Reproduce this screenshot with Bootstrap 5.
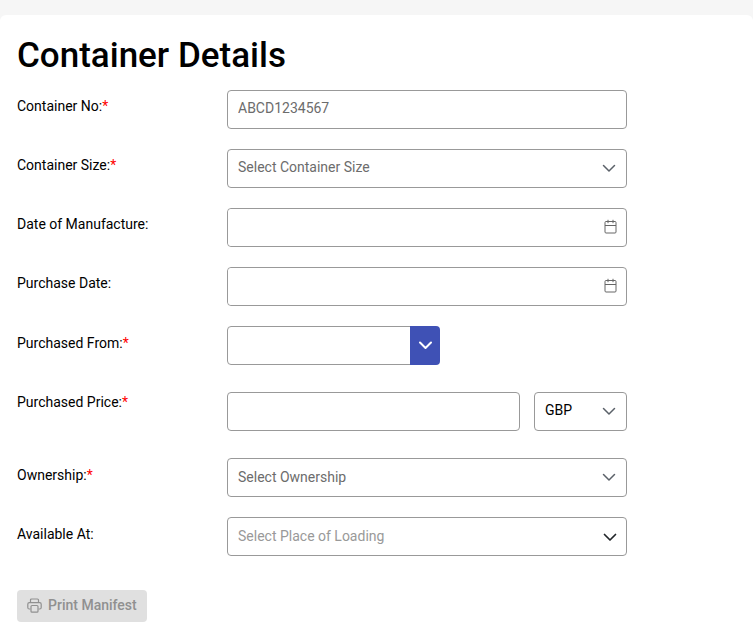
<!DOCTYPE html>
<html lang="en">
<head>
<meta charset="utf-8">
<meta name="viewport" content="width=device-width, initial-scale=1">
<title>Container Details</title>
<link href="https://cdn.jsdelivr.net/npm/bootstrap@5.3.0/dist/css/bootstrap.min.css" rel="stylesheet">
<style>
  body { background: #f6f6f6; font-family: Roboto, "Liberation Sans", sans-serif; font-size: 14px; line-height: 20px; color: #000; }
  .panel { background: #fff; border-radius: 6px 6px 0 0; margin-top: 15px; padding: 19px 17px 9px; min-height: calc(100vh - 15px); }
  .panel-title { font-size: 35px; line-height: 44px; font-weight: 500; margin-bottom: 12px; }
  .form-rows { display: grid; gap: 20px; }
  .form-row { display: grid; grid-template-columns: 210px minmax(0, 400px); }
  .row-label { padding-top: 6px; justify-self: start; align-self: start; }
  .req { color: #f00; }
  .price-row .row-field { padding: 7px 0; gap: 14px; }
  .price-row .row-label, .low-label .row-label { padding-top: 7px; }
  .currency { flex: 0 0 93px; }
  .supplier { max-width: 213px; }
  .form-control, .form-select { height: 39px; border: 1px solid #999; border-radius: 4px; padding: 7px 10px 10px; font-size: 14px; line-height: 20px; color: #000; }
  .form-control::placeholder { color: #6c6c6c; opacity: 1; }
  .low-label .form-select { padding: 8px 34px 9px 10px; }
  .form-select { padding-right: 34px; background-size: 14px 14px; background-position: right 10px top 11px;
    background-image: url("data:image/svg+xml,%3csvg xmlns='http://www.w3.org/2000/svg' viewBox='0 0 14 14'%3e%3cpath fill='none' stroke='%235b6169' stroke-width='1.5' stroke-linecap='round' stroke-linejoin='round' d='M1.500 4.500 7 10l5.500-5.500'/%3e%3c/svg%3e"); }
  .form-select.unset { color: #6c6c6c; }
  .form-select.faded { color: #999; background-position: right 9px top 12px;
    background-image: url("data:image/svg+xml,%3csvg xmlns='http://www.w3.org/2000/svg' viewBox='0 0 14 14'%3e%3cpath fill='none' stroke='%23212529' stroke-width='1.7' stroke-linecap='round' stroke-linejoin='round' d='M1.500 4.500 7 10l5.500-5.500'/%3e%3c/svg%3e"); }
  .form-select option { color: #000; }
  .date-box { border: 1px solid #999; border-radius: 4px; height: 39px; }
  .date-box .form-control { height: 37px; border: 0; }
  .date-btn { width: 32px; padding: 0 1px 2px 0; border: 0; color: #666; line-height: 0; }
  .drop-btn { width: 30px; padding: 0; border: 0; background: #3f51b5; color: #fff; border-radius: 4px; line-height: 0; }
  .drop-btn:hover { background: #35459c; color: #fff; }
  .print-btn { margin-top: 34px; height: 32px; padding: 0 10px 2px; font-size: 14px; line-height: 20px; font-weight: 500; border: 0; border-radius: 4px; gap: 6px; }
  .print-btn:disabled { background: #e0e0e0; color: #909090; opacity: 1; }
</style>
<script src="https://cdn.jsdelivr.net/npm/bootstrap@5.3.0/dist/js/bootstrap.bundle.min.js" defer></script>
</head>
<body>
<main class="panel">
  <h1 class="panel-title">Container Details</h1>
  <form>
    <div class="form-rows">
      <div class="form-row">
        <label class="row-label" for="no">Container No:<span class="req">*</span></label>
        <div class="row-field"><input class="form-control" id="no" type="text" placeholder="ABCD1234567"></div>
      </div>
      <div class="form-row">
        <label class="row-label" for="size">Container Size:<span class="req">*</span></label>
        <div class="row-field"><select class="form-select unset" id="size"><option>Select Container Size</option></select></div>
      </div>
      <div class="form-row">
        <label class="row-label" for="made">Date of Manufacture:</label>
        <div class="row-field date-box d-flex">
          <input class="form-control" id="made" type="text">
          <button class="btn date-btn" type="button" aria-label="Choose date of manufacture">
            <svg width="15" height="16" viewBox="0 0 15 16" fill="none" stroke="currentColor"><rect x="2" y="2.500" width="11" height="11.500" rx="1"/><path d="M2 6.500h11M5 .8v3.400M10 .8v3.400"/></svg>
          </button>
        </div>
      </div>
      <div class="form-row">
        <label class="row-label" for="bought">Purchase Date:</label>
        <div class="row-field date-box d-flex">
          <input class="form-control" id="bought" type="text">
          <button class="btn date-btn" type="button" aria-label="Choose purchase date">
            <svg width="15" height="16" viewBox="0 0 15 16" fill="none" stroke="currentColor"><rect x="2" y="2.500" width="11" height="11.500" rx="1"/><path d="M2 6.500h11M5 .8v3.400M10 .8v3.400"/></svg>
          </button>
        </div>
      </div>
      <div class="form-row low-label">
        <label class="row-label" for="from">Purchased From:<span class="req">*</span></label>
        <div class="row-field">
          <div class="input-group supplier">
            <input class="form-control" id="from" type="text">
            <button class="btn drop-btn" type="button" aria-label="Show suppliers">
              <svg width="14" height="14" viewBox="0 0 14 14" fill="none" stroke="currentColor" stroke-width="2" stroke-linecap="round" stroke-linejoin="round"><path d="M2 3.500 7.500 9 13 3.500"/></svg>
            </button>
          </div>
        </div>
      </div>
    </div>
    <div class="form-rows pt-3 mt-1">
      <div class="form-row price-row">
        <label class="row-label" for="price">Purchased Price:<span class="req">*</span></label>
        <div class="row-field d-flex">
          <input class="form-control" id="price" type="text">
          <select class="form-select currency" aria-label="Currency"><option>GBP</option></select>
        </div>
      </div>
      <div class="form-row low-label">
        <label class="row-label" for="owner">Ownership:<span class="req">*</span></label>
        <div class="row-field"><select class="form-select unset" id="owner"><option>Select Ownership</option></select></div>
      </div>
      <div class="form-row low-label">
        <label class="row-label" for="place">Available At:</label>
        <div class="row-field"><select class="form-select faded" id="place"><option>Select Place of Loading</option></select></div>
      </div>
    </div>
    <button class="btn print-btn d-inline-flex align-items-center" type="button" disabled>
      <svg width="15" height="15" viewBox="0 0 15 15" fill="none" stroke="currentColor" stroke-width="1.200" stroke-linejoin="round"><path d="M3.500 4.500V2q0-1 1-1h6q1 0 1 1v2.500M3.500 11H2.300Q.8 11 .8 9.500V6.200Q.8 4.700 2.300 4.700h10.400q1.500 0 1.500 1.500v3.300q0 1.500-1.500 1.500h-1.200"/><rect x="4" y="7.500" width="7" height="6.700" rx="1"/></svg>
      Print Manifest
    </button>
  </form>
</main>
</body>
</html>
